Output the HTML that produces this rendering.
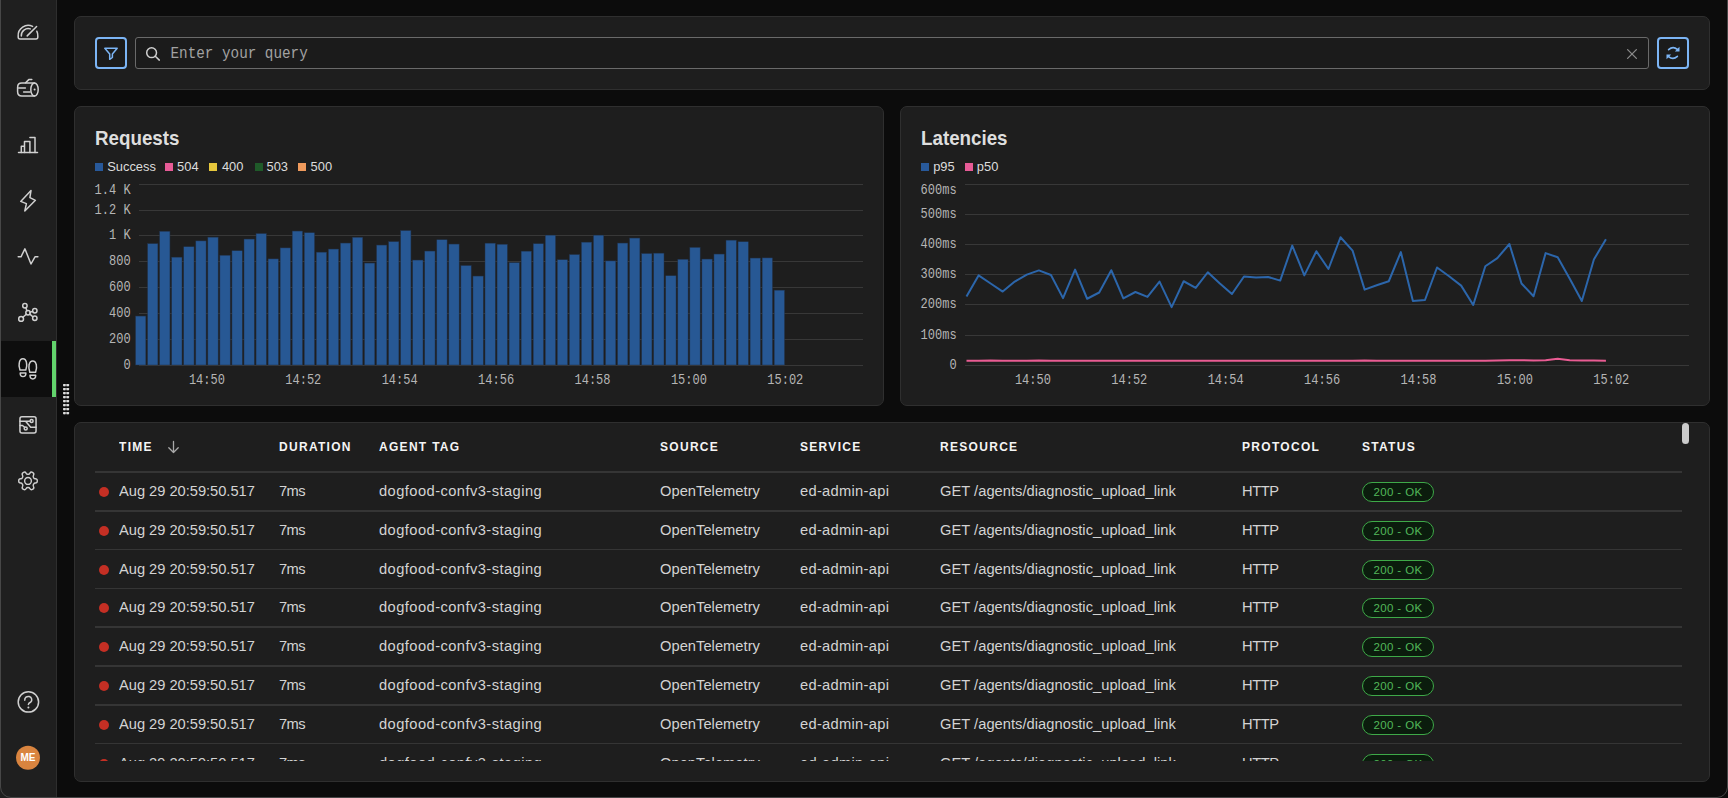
<!DOCTYPE html>
<html><head><meta charset="utf-8">
<style>
*{box-sizing:border-box;margin:0;padding:0}
html,body{width:1728px;height:798px;overflow:hidden;background:#0c0c0c}
body{position:relative;font-family:"Liberation Sans", sans-serif;color:#d9d9d9}
.abs{position:absolute}
.win{position:absolute;left:0;top:-12px;width:1728px;height:810px;border:1px solid #474747;border-radius:11px;pointer-events:none}
.side{position:absolute;left:0;top:0;width:57px;height:798px;background:#1f1f1f;border-right:1px solid #2e2e2e}
.active{position:absolute;left:1px;top:341px;width:55px;height:56px;background:#0e0e0e}
.activebar{position:absolute;left:52px;top:341px;width:4px;height:56px;background:#62d36c}
.panel{position:absolute;background:#1e1e1e;border:1px solid #2f2f2f;border-radius:7px}
.btn{position:absolute;width:32px;height:32px;border:2px solid #7cb5f5;border-radius:4px;background:#1b1b1b}
.search{position:absolute;left:135px;top:37px;width:1514px;height:32px;border:1px solid #6a6a6a;border-radius:3px;background:#1b1b1b}
.ph{position:absolute;left:170.5px;top:44.6px;font-family:"Liberation Mono", monospace;font-size:14.3px;color:#a2a2a2;line-height:18px;white-space:pre;transform:scaleY(1.09)}
.title{position:absolute;font-weight:bold;font-size:18.75px;color:#dedede;line-height:22px;transform:scaleY(1.07)}
.legend{position:absolute;font-size:12.9px;line-height:14px;color:#dcdcdc;white-space:pre}
.sq{display:inline-block;width:8px;height:8px;vertical-align:0px;margin-right:4px}
.yl{position:absolute;font-family:"Liberation Mono", monospace;font-size:12px;line-height:16px;color:#b5b5b5;text-align:right;white-space:pre;transform:scaleY(1.15);transform-origin:right center}
.xl{position:absolute;width:60px;text-align:center;font-family:"Liberation Mono", monospace;font-size:12px;line-height:16px;color:#b5b5b5;transform:scaleY(1.15)}
.th{position:absolute;top:439px;font-weight:bold;font-size:12px;letter-spacing:1.3px;color:#f5f5f5;line-height:16px;white-space:pre;transform:scaleY(1.09)}
.td{position:absolute;font-size:14.7px;line-height:20px;color:#d3d3d3;white-space:pre;transform:scaleY(1.05)}
.hline{position:absolute;left:95px;width:1587px;height:1.5px;background:#353535}
.dot{position:absolute;left:99px;width:10px;height:10px;border-radius:50%;background:#c42f24}
.badge{position:absolute;left:1362px;width:72px;height:20px;border:1px solid #3ea948;border-radius:10px;background:#0b1c0d;color:#52b85a;font-size:11.5px;line-height:18px;text-align:center;letter-spacing:0.4px}
.clip{position:absolute;left:75px;top:423px;width:1634px;height:338px;overflow:hidden}
</style></head><body>
<div class="side"></div>
<div class="active"></div>
<div class="activebar"></div>

<svg class="abs" style="left:0;top:0" width="57" height="798">
<g fill="none" stroke="#d0d0d0" stroke-width="1.5" stroke-linecap="round" stroke-linejoin="round">
<!-- gauge -->
<path d="M32.6 26.4A10 10 0 0 0 18.2 36V37.2Q18.2 38.9 20 38.9H36Q37.8 38.9 37.8 37.2V36A10 10 0 0 0 36.8 31.2"/>
<path d="M21.3 36A7 7 0 0 1 30.3 28.9"/>
<path d="M27.2 35.9L36.6 26.5"/>
<!-- log -->
<path d="M34.5 83H21.8Q17.6 83 17.6 87.2V91.8Q17.6 96 21.8 96H34.5"/>
<ellipse cx="34.5" cy="89.5" rx="3.7" ry="6.5"/>
<path d="M25.6 82.8L28.8 79.6H31.8"/>
<path d="M18.6 88H25.4"/>
<path d="M23.6 92H30"/>
<!-- bars -->
<path d="M18.5 152.4H37.5"/>
<path d="M21.3 152.4V146.2H24.5V152.4M24.5 141.6H29.9V152.4M29.9 137.4H35V152.4M24.5 146.2V141.6"/>
<!-- bolt -->
<path d="M31 190.6L29.9 197.6L35.4 200.3L24.8 211L26.4 203.6L20.7 201.4Z"/>
<!-- activity -->
<path d="M18.2 256.8H21L24.9 248.8L31 264L35 256.8H37.9"/>
<!-- network -->
<circle cx="28" cy="312.8" r="2.2"/>
<circle cx="24.9" cy="305.8" r="2.2"/>
<circle cx="34.8" cy="310.8" r="2.2"/>
<circle cx="34.8" cy="318.2" r="2.2"/>
<circle cx="21.1" cy="318.9" r="2.4"/>
<path d="M26.9 310.8L25.9 307.8M30.1 312.2L32.6 311.4M29.9 314.1L32.8 316.7M26.3 314.3L22.9 317.3"/>
<!-- footprints -->
<path d="M20 370C19 367 18.8 364.5 19.3 362.5C19.9 359.8 21.3 358.7 22.9 358.7C24.5 358.7 25.9 359.8 26.5 362.5C27 364.5 26.8 367 25.8 370Z"/>
<path d="M20.2 373H25.9Q25.9 376.6 23 376.6Q20.2 376.6 20.2 373Z"/>
<g transform="translate(9.8 2.3)">
<path d="M20 370C19 367 18.8 364.5 19.3 362.5C19.9 359.8 21.3 358.7 22.9 358.7C24.5 358.7 25.9 359.8 26.5 362.5C27 364.5 26.8 367 25.8 370Z"/>
<path d="M20.2 373H25.9Q25.9 376.6 23 376.6Q20.2 376.6 20.2 373Z"/>
</g>
<!-- circuit -->
<rect x="19.95" y="416.65" width="16.1" height="16.25" rx="2"/>
<path d="M20 421.2H30.1M25.6 421.2L30.7 427.3H36M20 425.5H22.5L24.6 427.3"/>
<circle cx="31.6" cy="421.1" r="1.5"/>
<circle cx="25.7" cy="428.5" r="1.5"/>
<!-- settings -->
<g transform="translate(28 480.9) scale(0.93 0.97) rotate(90) translate(-12 -12)">
<path d="M12.22 2h-.44a2 2 0 0 0-2 2v.18a2 2 0 0 1-1 1.73l-.43.25a2 2 0 0 1-2 0l-.15-.08a2 2 0 0 0-2.73.73l-.22.38a2 2 0 0 0 .73 2.73l.15.1a2 2 0 0 1 1 1.72v.51a2 2 0 0 1-1 1.74l-.15.09a2 2 0 0 0-.73 2.73l.22.38a2 2 0 0 0 2.730.73l.15-.08a2 2 0 0 1 2 0l.43.25a2 2 0 0 1 1 1.73V20a2 2 0 0 0 2 2h.44a2 2 0 0 0 2-2v-.18a2 2 0 0 1 1-1.73l.43-.25a2 2 0 0 1 2 0l.15.08a2 2 0 0 0 2.73-.73l.22-.39a2 2 0 0 0-.73-2.73l-.15-.08a2 2 0 0 1-1-1.74v-.5a2 2 0 0 1 1-1.740l.15-.09a2 2 0 0 0 .73-2.73l-.22-.38a2 2 0 0 0-2.73-.73l-.15.08a2 2 0 0 1-2 0l-.43-.25a2 2 0 0 1-1-1.73V4a2 2 0 0 0-2-2z"/>
<circle cx="12" cy="12" r="3.6"/>
</g>
<!-- help -->
<circle cx="28.4" cy="701.9" r="10.2"/>
<path d="M24.8 700.2A3.5 3.3 0 1 1 30.8 702Q28.4 703.2 28.4 704.4"/>
</g>
<circle cx="28.4" cy="707.5" r="1" fill="#d0d0d0"/><circle cx="34.6" cy="89.6" r="1" fill="#d0d0d0"/>
<circle cx="28" cy="757.8" r="12" fill="#d9843f"/>
</svg>

<div class="abs" style="left:20px;top:752px;width:16px;text-align:center;font-size:10px;font-weight:bold;color:#fff;line-height:12px">ME</div>

<!-- drag handle -->
<svg class="abs" style="left:62px;top:383px" width="8" height="32">
<rect x="1" y="1" width="6.2" height="2.2" rx="0.6" fill="#8c8c8c"/><rect x="1.2" y="1" width="2.2" height="2.2" rx="0.6" fill="#dedede"/><rect x="4.8" y="1" width="2.2" height="2.2" rx="0.6" fill="#dedede"/><rect x="1" y="5" width="6.2" height="2.2" rx="0.6" fill="#8c8c8c"/><rect x="1.2" y="5" width="2.2" height="2.2" rx="0.6" fill="#dedede"/><rect x="4.8" y="5" width="2.2" height="2.2" rx="0.6" fill="#dedede"/><rect x="1" y="9" width="6.2" height="2.2" rx="0.6" fill="#8c8c8c"/><rect x="1.2" y="9" width="2.2" height="2.2" rx="0.6" fill="#dedede"/><rect x="4.8" y="9" width="2.2" height="2.2" rx="0.6" fill="#dedede"/><rect x="1" y="13" width="6.2" height="2.2" rx="0.6" fill="#8c8c8c"/><rect x="1.2" y="13" width="2.2" height="2.2" rx="0.6" fill="#dedede"/><rect x="4.8" y="13" width="2.2" height="2.2" rx="0.6" fill="#dedede"/><rect x="1" y="17" width="6.2" height="2.2" rx="0.6" fill="#8c8c8c"/><rect x="1.2" y="17" width="2.2" height="2.2" rx="0.6" fill="#dedede"/><rect x="4.8" y="17" width="2.2" height="2.2" rx="0.6" fill="#dedede"/><rect x="1" y="21" width="6.2" height="2.2" rx="0.6" fill="#8c8c8c"/><rect x="1.2" y="21" width="2.2" height="2.2" rx="0.6" fill="#dedede"/><rect x="4.8" y="21" width="2.2" height="2.2" rx="0.6" fill="#dedede"/><rect x="1" y="25" width="6.2" height="2.2" rx="0.6" fill="#8c8c8c"/><rect x="1.2" y="25" width="2.2" height="2.2" rx="0.6" fill="#dedede"/><rect x="4.8" y="25" width="2.2" height="2.2" rx="0.6" fill="#dedede"/><rect x="1" y="29" width="6.2" height="2.2" rx="0.6" fill="#8c8c8c"/><rect x="1.2" y="29" width="2.2" height="2.2" rx="0.6" fill="#dedede"/><rect x="4.8" y="29" width="2.2" height="2.2" rx="0.6" fill="#dedede"/>
</svg>

<!-- top query panel -->
<div class="panel" style="left:74px;top:16px;width:1636px;height:74px"></div>
<div class="btn" style="left:95px;top:37px"></div>
<div class="search"></div>
<div class="ph">Enter your query</div>
<div class="btn" style="left:1657px;top:37px"></div>
<svg class="abs" style="left:0;top:0" width="1728" height="100">
<g fill="none" stroke-linecap="round" stroke-linejoin="round">
<path d="M104.8 48.3H117.2L112.4 54V57.5L109.7 59.3V54Z" stroke="#7cb5f5" stroke-width="1.5"/>
<circle cx="151.6" cy="52.7" r="4.9" stroke="#cfcfcf" stroke-width="1.5"/>
<path d="M155.3 56.3L159.3 60.1" stroke="#cfcfcf" stroke-width="1.5"/>
<path d="M1627.6 49.6L1636.4 58.4M1636.4 49.6L1627.6 58.4" stroke="#8a8a8a" stroke-width="1.3"/>
<path d="M1668.6 49.6Q1673 45.6 1677.4 49.4" stroke="#7cb5f5" stroke-width="1.6"/>
<path d="M1677.4 56.4Q1673 60.4 1668.6 56.6" stroke="#7cb5f5" stroke-width="1.6"/>
</g>
<path d="M1679.5 46.8V51.6H1674.8Z" fill="#7cb5f5"/>
<path d="M1666.5 59.2V54.4H1671.2Z" fill="#7cb5f5"/>
</svg>

<!-- charts -->
<div class="panel" style="left:74px;top:106px;width:810px;height:300px"></div>
<div class="panel" style="left:900px;top:106px;width:810px;height:300px"></div>
<div class="title" style="left:95px;top:127.5px">Requests</div>
<div class="title" style="left:921px;top:127.5px">Latencies</div>
<div class="abs" style="left:95px;top:163px;width:8px;height:8px;background:#28599a"></div><div class="legend" style="left:107.2px;top:159.5px">Success</div><div class="abs" style="left:164.9px;top:163px;width:8px;height:8px;background:#e65b96"></div><div class="legend" style="left:177.1px;top:159.5px">504</div><div class="abs" style="left:209.1px;top:163px;width:8px;height:8px;background:#e6c73c"></div><div class="legend" style="left:221.9px;top:159.5px">400</div><div class="abs" style="left:254.8px;top:163px;width:8px;height:8px;background:#1f5a29"></div><div class="legend" style="left:266.5px;top:159.5px">503</div><div class="abs" style="left:298px;top:163px;width:8px;height:8px;background:#ef9a5c"></div><div class="legend" style="left:310.6px;top:159.5px">500</div><div class="abs" style="left:920.9px;top:163px;width:8px;height:8px;background:#28599a"></div><div class="legend" style="left:933.2px;top:159.5px">p95</div><div class="abs" style="left:965.1px;top:163px;width:8px;height:8px;background:#e65b96"></div><div class="legend" style="left:976.8px;top:159.5px">p50</div>


<svg class="abs" style="left:0;top:0" width="1728" height="420">
<g stroke="#383838" stroke-width="1"><line x1="139" y1="184.5" x2="863" y2="184.5"/><line x1="139" y1="210.5" x2="863" y2="210.5"/><line x1="139" y1="235.5" x2="863" y2="235.5"/><line x1="139" y1="261.5" x2="863" y2="261.5"/><line x1="139" y1="287.5" x2="863" y2="287.5"/><line x1="139" y1="313.5" x2="863" y2="313.5"/><line x1="139" y1="339.5" x2="863" y2="339.5"/><line x1="139" y1="365.5" x2="863" y2="365.5"/><line x1="965" y1="184.5" x2="1689" y2="184.5"/><line x1="965" y1="214.5" x2="1689" y2="214.5"/><line x1="965" y1="244.5" x2="1689" y2="244.5"/><line x1="965" y1="274.5" x2="1689" y2="274.5"/><line x1="965" y1="304.5" x2="1689" y2="304.5"/><line x1="965" y1="335.5" x2="1689" y2="335.5"/><line x1="965" y1="365.5" x2="1689" y2="365.5"/></g>
<g fill="#275894" stroke="#22324a" stroke-width="0.5"><rect x="135.55" y="316.05" width="10.3" height="48.95"/><rect x="147.60" y="243.65" width="10.3" height="121.35"/><rect x="159.65" y="231.25" width="10.3" height="133.75"/><rect x="171.70" y="257.15" width="10.3" height="107.85"/><rect x="183.75" y="246.75" width="10.3" height="118.25"/><rect x="195.80" y="240.90" width="10.3" height="124.10"/><rect x="207.85" y="237.15" width="10.3" height="127.85"/><rect x="219.90" y="255.25" width="10.3" height="109.75"/><rect x="231.95" y="250.75" width="10.3" height="114.25"/><rect x="244.00" y="239.05" width="10.3" height="125.95"/><rect x="256.05" y="233.55" width="10.3" height="131.45"/><rect x="268.10" y="258.90" width="10.3" height="106.10"/><rect x="280.15" y="247.90" width="10.3" height="117.10"/><rect x="292.20" y="231.05" width="10.3" height="133.95"/><rect x="304.25" y="232.75" width="10.3" height="132.25"/><rect x="316.30" y="252.15" width="10.3" height="112.85"/><rect x="328.35" y="249.05" width="10.3" height="115.95"/><rect x="340.40" y="243.05" width="10.3" height="121.95"/><rect x="352.45" y="237.25" width="10.3" height="127.75"/><rect x="364.50" y="263.05" width="10.3" height="101.95"/><rect x="376.55" y="245.05" width="10.3" height="119.95"/><rect x="388.60" y="241.65" width="10.3" height="123.35"/><rect x="400.65" y="230.55" width="10.3" height="134.45"/><rect x="412.70" y="260.05" width="10.3" height="104.95"/><rect x="424.75" y="251.05" width="10.3" height="113.95"/><rect x="436.80" y="239.75" width="10.3" height="125.25"/><rect x="448.85" y="244.05" width="10.3" height="120.95"/><rect x="460.90" y="265.55" width="10.3" height="99.45"/><rect x="472.95" y="276.05" width="10.3" height="88.95"/><rect x="485.00" y="243.15" width="10.3" height="121.85"/><rect x="497.05" y="244.25" width="10.3" height="120.75"/><rect x="509.10" y="262.65" width="10.3" height="102.35"/><rect x="521.15" y="251.15" width="10.3" height="113.85"/><rect x="533.20" y="243.75" width="10.3" height="121.25"/><rect x="545.25" y="235.15" width="10.3" height="129.85"/><rect x="557.30" y="259.75" width="10.3" height="105.25"/><rect x="569.35" y="254.55" width="10.3" height="110.45"/><rect x="581.40" y="242.15" width="10.3" height="122.85"/><rect x="593.45" y="235.15" width="10.3" height="129.85"/><rect x="605.50" y="260.90" width="10.3" height="104.10"/><rect x="617.55" y="243.05" width="10.3" height="121.95"/><rect x="629.60" y="238.05" width="10.3" height="126.95"/><rect x="641.65" y="253.55" width="10.3" height="111.45"/><rect x="653.70" y="253.15" width="10.3" height="111.85"/><rect x="665.75" y="275.75" width="10.3" height="89.25"/><rect x="677.80" y="259.25" width="10.3" height="105.75"/><rect x="689.85" y="247.40" width="10.3" height="117.60"/><rect x="701.90" y="259.05" width="10.3" height="105.95"/><rect x="713.95" y="254.05" width="10.3" height="110.95"/><rect x="726.00" y="240.15" width="10.3" height="124.85"/><rect x="738.05" y="241.75" width="10.3" height="123.25"/><rect x="750.10" y="258.05" width="10.3" height="106.95"/><rect x="762.15" y="257.90" width="10.3" height="107.10"/><rect x="774.20" y="290.15" width="10.3" height="74.85"/></g>
<polyline fill="none" stroke="#2c66ab" stroke-width="2" stroke-linejoin="round" points="966.50,296.50 978.57,275.40 990.63,283.50 1002.70,291.60 1014.76,281.60 1026.83,274.60 1038.89,270.40 1050.95,275.00 1063.02,298.10 1075.09,269.60 1087.15,298.75 1099.21,292.50 1111.28,270.25 1123.35,298.40 1135.41,292.00 1147.47,296.90 1159.54,281.60 1171.61,307.10 1183.67,281.25 1195.73,287.90 1207.80,272.25 1219.87,283.50 1231.93,294.00 1243.99,276.50 1256.06,277.40 1268.12,277.00 1280.19,280.60 1292.26,245.60 1304.32,275.40 1316.38,251.25 1328.45,269.00 1340.51,237.25 1352.58,250.60 1364.64,289.60 1376.71,285.25 1388.78,281.25 1400.84,252.10 1412.90,301.00 1424.97,300.00 1437.03,267.50 1449.10,276.25 1461.16,285.60 1473.23,305.00 1485.30,266.25 1497.36,258.10 1509.42,244.00 1521.49,283.50 1533.55,296.25 1545.62,253.10 1557.68,257.25 1569.75,278.75 1581.82,301.00 1593.88,259.50 1605.94,239.20"/>
<polyline fill="none" stroke="#e95c93" stroke-width="2" stroke-linejoin="round" points="966.50,360.80 978.57,360.80 990.63,360.50 1002.70,360.80 1014.76,360.80 1026.83,360.80 1038.89,360.50 1050.95,360.80 1063.02,360.80 1075.09,360.80 1087.15,360.80 1099.21,360.80 1111.28,360.80 1123.35,360.80 1135.41,360.80 1147.47,360.80 1159.54,360.80 1171.61,360.80 1183.67,360.80 1195.73,360.80 1207.80,360.80 1219.87,360.80 1231.93,360.80 1243.99,360.80 1256.06,360.80 1268.12,360.80 1280.19,360.80 1292.26,360.80 1304.32,360.80 1316.38,360.80 1328.45,360.80 1340.51,360.80 1352.58,360.80 1364.64,360.50 1376.71,360.80 1388.78,360.80 1400.84,360.80 1412.90,360.80 1424.97,360.80 1437.03,360.80 1449.10,360.80 1461.16,360.80 1473.23,360.80 1485.30,360.80 1497.36,360.50 1509.42,360.30 1521.49,360.20 1533.55,360.40 1545.62,360.30 1557.68,358.70 1569.75,360.30 1581.82,360.40 1593.88,360.60 1605.94,360.80"/>
</svg>
<div class="yl" style="right:1597.4px;top:182.7px">1.4 K</div><div class="yl" style="right:1597.4px;top:202.6px">1.2 K</div><div class="yl" style="right:1597.4px;top:228.4px">1 K</div><div class="yl" style="right:1597.4px;top:254.4px">800</div><div class="yl" style="right:1597.4px;top:280.2px">600</div><div class="yl" style="right:1597.4px;top:306.2px">400</div><div class="yl" style="right:1597.4px;top:332.2px">200</div><div class="yl" style="right:1597.4px;top:358.0px">0</div>
<div class="yl" style="right:771.4px;top:182.8px">600ms</div><div class="yl" style="right:771.4px;top:207.1px">500ms</div><div class="yl" style="right:771.4px;top:237.1px">400ms</div><div class="yl" style="right:771.4px;top:267.1px">300ms</div><div class="yl" style="right:771.4px;top:297.1px">200ms</div><div class="yl" style="right:771.4px;top:327.8px">100ms</div><div class="yl" style="right:771.4px;top:358.0px">0</div>
<div class="xl" style="left:176.9px;top:372.9px">14:50</div><div class="xl" style="left:273.3px;top:372.9px">14:52</div><div class="xl" style="left:369.7px;top:372.9px">14:54</div><div class="xl" style="left:466.1px;top:372.9px">14:56</div><div class="xl" style="left:562.5px;top:372.9px">14:58</div><div class="xl" style="left:658.9px;top:372.9px">15:00</div><div class="xl" style="left:755.3px;top:372.9px">15:02</div>
<div class="xl" style="left:1002.9px;top:372.9px">14:50</div><div class="xl" style="left:1099.3px;top:372.9px">14:52</div><div class="xl" style="left:1195.7px;top:372.9px">14:54</div><div class="xl" style="left:1292.1px;top:372.9px">14:56</div><div class="xl" style="left:1388.5px;top:372.9px">14:58</div><div class="xl" style="left:1484.9px;top:372.9px">15:00</div><div class="xl" style="left:1581.3px;top:372.9px">15:02</div>

<!-- table -->
<div class="panel" style="left:74px;top:422px;width:1636px;height:360px"></div>
<div class="clip"><div class="abs" style="left:-75px;top:-423px;width:1728px;height:798px"><div class="th" style="left:119px">TIME</div><div class="th" style="left:279px">DURATION</div><div class="th" style="left:379px">AGENT TAG</div><div class="th" style="left:660px">SOURCE</div><div class="th" style="left:800px">SERVICE</div><div class="th" style="left:940px">RESOURCE</div><div class="th" style="left:1242px">PROTOCOL</div><div class="th" style="left:1362px">STATUS</div><svg class="abs" style="left:0;top:0" width="1728" height="798"><g fill="none" stroke="#a9a9a9" stroke-width="1.3" stroke-linecap="round" stroke-linejoin="round"><path d="M173.5 441.5V452.5M168.8 447.8L173.5 452.5L178.2 447.8"/></g></svg><div class="hline" style="top:471px;height:2px"></div><div class="dot" style="top:487.00px"></div><div class="td" style="left:119px;top:481.00px;letter-spacing:-0.03px">Aug 29 20:59:50.517</div><div class="td" style="left:279px;top:481.00px;letter-spacing:-0.6px">7ms</div><div class="td" style="left:379px;top:481.00px;letter-spacing:0.436px">dogfood-confv3-staging</div><div class="td" style="left:660px;top:481.00px;letter-spacing:0.027px">OpenTelemetry</div><div class="td" style="left:800px;top:481.00px;letter-spacing:0.292px">ed-admin-api</div><div class="td" style="left:940px;top:481.00px;letter-spacing:0.028px">GET /agents/diagnostic_upload_link</div><div class="td" style="left:1242px;top:481.00px;letter-spacing:-0.46px">HTTP</div><div class="badge" style="top:482.00px">200 - OK</div><div class="hline" style="top:510.00px"></div><div class="dot" style="top:525.81px"></div><div class="td" style="left:119px;top:519.81px;letter-spacing:-0.03px">Aug 29 20:59:50.517</div><div class="td" style="left:279px;top:519.81px;letter-spacing:-0.6px">7ms</div><div class="td" style="left:379px;top:519.81px;letter-spacing:0.436px">dogfood-confv3-staging</div><div class="td" style="left:660px;top:519.81px;letter-spacing:0.027px">OpenTelemetry</div><div class="td" style="left:800px;top:519.81px;letter-spacing:0.292px">ed-admin-api</div><div class="td" style="left:940px;top:519.81px;letter-spacing:0.028px">GET /agents/diagnostic_upload_link</div><div class="td" style="left:1242px;top:519.81px;letter-spacing:-0.46px">HTTP</div><div class="badge" style="top:520.81px">200 - OK</div><div class="hline" style="top:548.81px"></div><div class="dot" style="top:564.62px"></div><div class="td" style="left:119px;top:558.62px;letter-spacing:-0.03px">Aug 29 20:59:50.517</div><div class="td" style="left:279px;top:558.62px;letter-spacing:-0.6px">7ms</div><div class="td" style="left:379px;top:558.62px;letter-spacing:0.436px">dogfood-confv3-staging</div><div class="td" style="left:660px;top:558.62px;letter-spacing:0.027px">OpenTelemetry</div><div class="td" style="left:800px;top:558.62px;letter-spacing:0.292px">ed-admin-api</div><div class="td" style="left:940px;top:558.62px;letter-spacing:0.028px">GET /agents/diagnostic_upload_link</div><div class="td" style="left:1242px;top:558.62px;letter-spacing:-0.46px">HTTP</div><div class="badge" style="top:559.62px">200 - OK</div><div class="hline" style="top:587.62px"></div><div class="dot" style="top:603.43px"></div><div class="td" style="left:119px;top:597.43px;letter-spacing:-0.03px">Aug 29 20:59:50.517</div><div class="td" style="left:279px;top:597.43px;letter-spacing:-0.6px">7ms</div><div class="td" style="left:379px;top:597.43px;letter-spacing:0.436px">dogfood-confv3-staging</div><div class="td" style="left:660px;top:597.43px;letter-spacing:0.027px">OpenTelemetry</div><div class="td" style="left:800px;top:597.43px;letter-spacing:0.292px">ed-admin-api</div><div class="td" style="left:940px;top:597.43px;letter-spacing:0.028px">GET /agents/diagnostic_upload_link</div><div class="td" style="left:1242px;top:597.43px;letter-spacing:-0.46px">HTTP</div><div class="badge" style="top:598.43px">200 - OK</div><div class="hline" style="top:626.43px"></div><div class="dot" style="top:642.24px"></div><div class="td" style="left:119px;top:636.24px;letter-spacing:-0.03px">Aug 29 20:59:50.517</div><div class="td" style="left:279px;top:636.24px;letter-spacing:-0.6px">7ms</div><div class="td" style="left:379px;top:636.24px;letter-spacing:0.436px">dogfood-confv3-staging</div><div class="td" style="left:660px;top:636.24px;letter-spacing:0.027px">OpenTelemetry</div><div class="td" style="left:800px;top:636.24px;letter-spacing:0.292px">ed-admin-api</div><div class="td" style="left:940px;top:636.24px;letter-spacing:0.028px">GET /agents/diagnostic_upload_link</div><div class="td" style="left:1242px;top:636.24px;letter-spacing:-0.46px">HTTP</div><div class="badge" style="top:637.24px">200 - OK</div><div class="hline" style="top:665.24px"></div><div class="dot" style="top:681.05px"></div><div class="td" style="left:119px;top:675.05px;letter-spacing:-0.03px">Aug 29 20:59:50.517</div><div class="td" style="left:279px;top:675.05px;letter-spacing:-0.6px">7ms</div><div class="td" style="left:379px;top:675.05px;letter-spacing:0.436px">dogfood-confv3-staging</div><div class="td" style="left:660px;top:675.05px;letter-spacing:0.027px">OpenTelemetry</div><div class="td" style="left:800px;top:675.05px;letter-spacing:0.292px">ed-admin-api</div><div class="td" style="left:940px;top:675.05px;letter-spacing:0.028px">GET /agents/diagnostic_upload_link</div><div class="td" style="left:1242px;top:675.05px;letter-spacing:-0.46px">HTTP</div><div class="badge" style="top:676.05px">200 - OK</div><div class="hline" style="top:704.05px"></div><div class="dot" style="top:719.86px"></div><div class="td" style="left:119px;top:713.86px;letter-spacing:-0.03px">Aug 29 20:59:50.517</div><div class="td" style="left:279px;top:713.86px;letter-spacing:-0.6px">7ms</div><div class="td" style="left:379px;top:713.86px;letter-spacing:0.436px">dogfood-confv3-staging</div><div class="td" style="left:660px;top:713.86px;letter-spacing:0.027px">OpenTelemetry</div><div class="td" style="left:800px;top:713.86px;letter-spacing:0.292px">ed-admin-api</div><div class="td" style="left:940px;top:713.86px;letter-spacing:0.028px">GET /agents/diagnostic_upload_link</div><div class="td" style="left:1242px;top:713.86px;letter-spacing:-0.46px">HTTP</div><div class="badge" style="top:714.86px">200 - OK</div><div class="hline" style="top:742.86px"></div><div class="dot" style="top:758.67px"></div><div class="td" style="left:119px;top:752.67px;letter-spacing:-0.03px">Aug 29 20:59:50.517</div><div class="td" style="left:279px;top:752.67px;letter-spacing:-0.6px">7ms</div><div class="td" style="left:379px;top:752.67px;letter-spacing:0.436px">dogfood-confv3-staging</div><div class="td" style="left:660px;top:752.67px;letter-spacing:0.027px">OpenTelemetry</div><div class="td" style="left:800px;top:752.67px;letter-spacing:0.292px">ed-admin-api</div><div class="td" style="left:940px;top:752.67px;letter-spacing:0.028px">GET /agents/diagnostic_upload_link</div><div class="td" style="left:1242px;top:752.67px;letter-spacing:-0.46px">HTTP</div><div class="badge" style="top:753.67px">200 - OK</div></div></div>
<div class="abs" style="left:1682px;top:423px;width:7px;height:21px;border-radius:4px;background:#cbcbcb"></div>

<div class="win"></div>
</body></html>
